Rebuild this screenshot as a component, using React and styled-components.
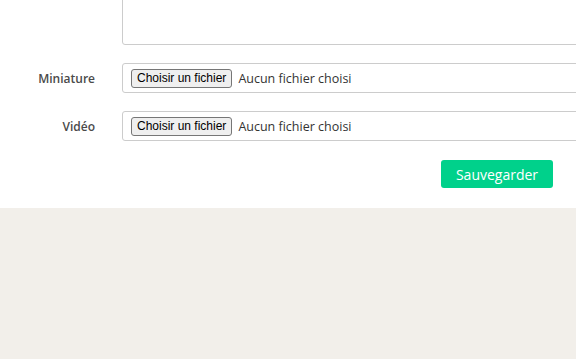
import React from 'react';
import styled, { createGlobalStyle } from 'styled-components';

const GlobalStyle = createGlobalStyle`
  html, body {
    margin: 0;
    padding: 0;
    background: #f2efea;
    font-family: "Open Sans", "Liberation Sans", sans-serif;
  }
`

const Panel = styled.div`
  background: #fff;
  overflow: hidden;
  padding: 0 23px 20px 0;
`

const Form = styled.div`
  display: grid;
  grid-template-columns: 122px 1fr;
  row-gap: 18px;
  align-items: center;
`

const Label = styled.label`
  text-align: right;
  padding-right: 27px;
  font-size: 12px;
  font-weight: 600;
  color: #4a4a4a;
`

const TextArea = styled.div`
  margin-top: -12px;
  height: 55px;
  width: calc(100% + 40px);
  border: 1px solid #ccc;
  border-radius: 3px;
`

const FileBox = styled.div`
  display: flex;
  align-items: center;
  gap: 6px;
  height: 28px;
  width: calc(100% + 40px);
  padding-left: 8px;
  border: 1px solid #ccc;
  border-radius: 3px;
  box-sizing: content-box;
`

const FileButton = styled.button`
  height: 19px;
  padding: 0 5px;
  font-family: "Liberation Sans", Arial, sans-serif;
  font-size: 12px;
  color: #000;
  background: #efefef;
  border: 1px solid #767676;
  border-radius: 3px;
`

const FileName = styled.span`
  font-size: 12.5px;
  color: #333;
`

const Actions = styled.div`
  grid-column: 2;
  display: flex;
  justify-content: flex-end;
  margin-top: 1px;
`

const SaveButton = styled.button`
  width: 112px;
  height: 28px;
  border: none;
  border-radius: 3px;
  background: #00d18b;
  color: #fff;
  font-family: "Open Sans", sans-serif;
  font-size: 14px;
  font-weight: 500;
`

function FileField({ label }) {
  return (
    <>
      <Label>{label}</Label>
      <FileBox>
        <FileButton>Choisir un fichier</FileButton>
        <FileName>Aucun fichier choisi</FileName>
      </FileBox>
    </>
  )
}

export default function App() {
  return (
    <>
      <GlobalStyle />
      <Panel>
        <Form>
          <span />
          <TextArea />
          <FileField label="Miniature" />
          <FileField label="Vidéo" />
          <Actions>
            <SaveButton>Sauvegarder</SaveButton>
          </Actions>
        </Form>
      </Panel>
    </>
  )
}
